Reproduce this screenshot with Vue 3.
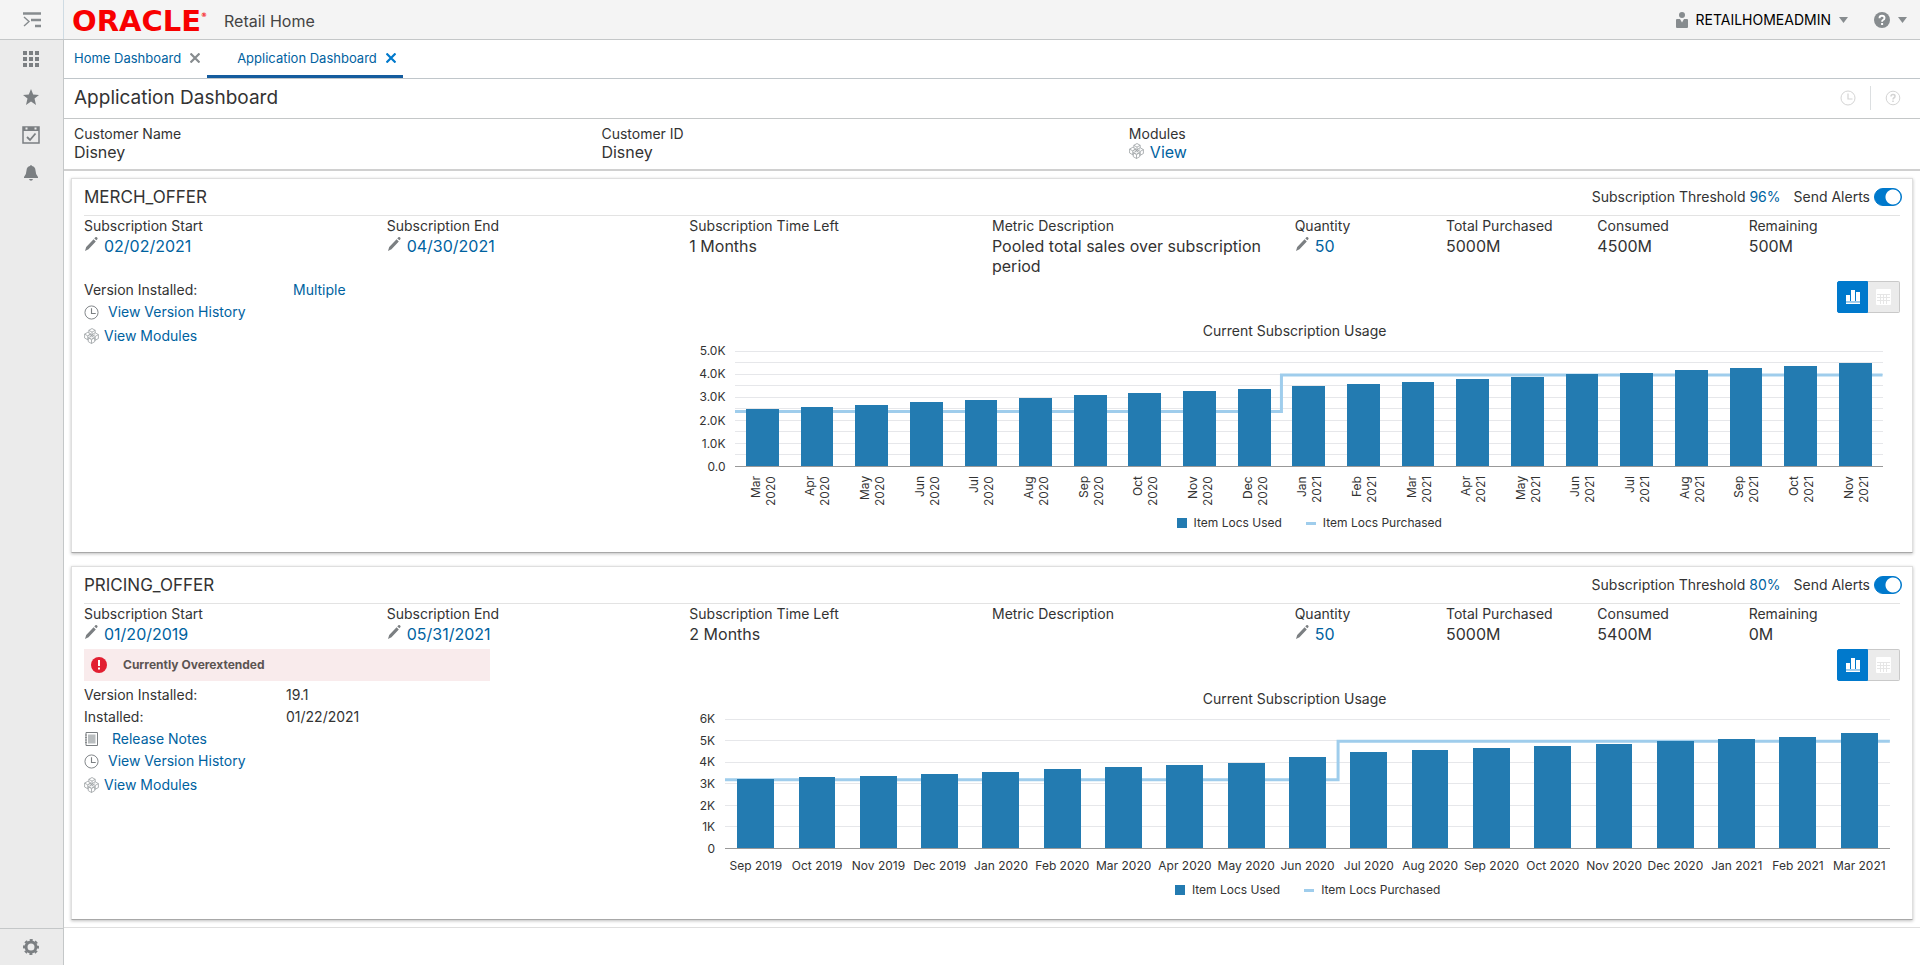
<script setup>
import { ref } from 'vue';

const MONTHS = ['Jan', 'Feb', 'Mar', 'Apr', 'May', 'Jun', 'Jul', 'Aug', 'Sep', 'Oct', 'Nov', 'Dec'];

// Consecutive months as { month, year } pairs, starting at the given one
function monthRange(startMonth, startYear, count) {
  return Array.from({ length: count }, (_, i) => {
    const index = MONTHS.indexOf(startMonth) + i;
    return { month: MONTHS[index % 12], year: startYear + Math.floor(index / 12) };
  });
}

const activeTab = ref('Application Dashboard');
const tabs = ['Home Dashboard', 'Application Dashboard'];

const offers = ref([
  {
    name: 'MERCH_OFFER',
    threshold: '96%',
    alerts: true,
    view: 'chart',
    overextended: false,
    fields: [
      { label: 'Subscription Start', value: '02/02/2021', editable: true },
      { label: 'Subscription End', value: '04/30/2021', editable: true },
      { label: 'Subscription Time Left', value: '1 Months' },
      { label: 'Metric Description', value: 'Pooled total sales over subscription period' },
      { label: 'Quantity', value: '50', editable: true },
      { label: 'Total Purchased', value: '5000M' },
      { label: 'Consumed', value: '4500M' },
      { label: 'Remaining', value: '500M' },
    ],
    version: null,
    chart: {
      rotated: true,
      max: 5,
      height: 115,
      step: 0.5,
      ticks: ['5.0K', '4.0K', '3.0K', '2.0K', '1.0K', '0.0'],
      months: monthRange('Mar', 2020, 21),
      used: [2.5, 2.58, 2.67, 2.8, 2.88, 2.97, 3.1, 3.18, 3.27, 3.36, 3.5, 3.58, 3.67, 3.8, 3.88, 3.98, 4.06, 4.19, 4.27, 4.36, 4.5],
      before: 2.37,
      after: 3.96,
      changeAt: 10,
    },
  },
  {
    name: 'PRICING_OFFER',
    threshold: '80%',
    alerts: true,
    view: 'chart',
    overextended: true,
    fields: [
      { label: 'Subscription Start', value: '01/20/2019', editable: true },
      { label: 'Subscription End', value: '05/31/2021', editable: true },
      { label: 'Subscription Time Left', value: '2 Months' },
      { label: 'Metric Description', value: '' },
      { label: 'Quantity', value: '50', editable: true },
      { label: 'Total Purchased', value: '5000M' },
      { label: 'Consumed', value: '5400M' },
      { label: 'Remaining', value: '0M' },
    ],
    version: '19.1',
    installed: '01/22/2021',
    chart: {
      rotated: false,
      max: 6,
      height: 129,
      step: 1,
      ticks: ['6K', '5K', '4K', '3K', '2K', '1K', '0'],
      months: monthRange('Sep', 2019, 19),
      used: [3.2, 3.28, 3.37, 3.46, 3.55, 3.69, 3.78, 3.88, 3.97, 4.25, 4.48, 4.57, 4.66, 4.75, 4.84, 5, 5.08, 5.17, 5.36],
      before: 3.17,
      after: 4.97,
      changeAt: 10,
    },
  },
]);

function gridLines(chart) {
  const count = Math.round(chart.max / chart.step);
  return Array.from({ length: count }, (_, i) => i * chart.step);
}

function stepPath(chart) {
  const y1 = chart.max - chart.before;
  const y2 = chart.max - chart.after;
  return `M0 ${y1}H${chart.changeAt}V${y2}H${chart.months.length}`;
}
</script>

<template>
  <div class="app">
    <svg class="symbols" aria-hidden="true">
      <symbol id="icon-pencil" viewBox="0 0 14 16">
        <path d="M1 15l1.200-4L9.600 3.200l2.200 2.200L4.500 13.200zM10.300 2.400l1-1.100q.8-.8 1.600 0l.4.5q.7.700 0 1.500l-.9 1z" fill="#7b7f82" />
      </symbol>
      <symbol id="icon-clock" viewBox="0 0 16 16">
        <circle cx="8" cy="8" r="7" fill="none" stroke="currentColor" />
        <path d="M8 3.500V9h4.500" fill="none" stroke="currentColor" stroke-width="1.200" />
      </symbol>
      <symbol id="icon-modules" viewBox="0 0 15 16">
        <g fill="#fff" stroke="#9b9fa2" stroke-width=".8" stroke-linejoin="round">
          <path d="M8 .5l3.200 1.800v3.900L8 8 4.800 6.200V2.300zM4.800 2.300L8 4.100l3.200-1.800M8 4.100V8" />
          <path d="M11.200 4.800l3.200 1.800v3.900l-3.200 1.800L8 10.500V6.600zM8 6.600l3.200 1.800 3.200-1.800M11.200 8.400v3.900" />
          <path d="M3.800 4.300L7 6.100V10l-3.200 1.800L.6 10V6.100zM.6 6.100l3.200 1.800L7 6.100M3.800 7.900v3.900" />
          <path d="M7.500 8l3.200 1.800v3.900l-3.200 1.800-3.200-1.800V9.800zM4.300 9.800l3.200 1.800 3.200-1.800M7.500 11.600v3.900" />
        </g>
      </symbol>
      <symbol id="icon-notes" viewBox="0 0 13 14">
        <path d="M1 .5h11.500v13H1z" fill="#fff" stroke="#7b7f82" />
        <path d="M3 2.500h7.500v9H3z" fill="#b9bdbf" />
        <path d="M0 3h2M0 5.500h2M0 8h2M0 10.500h2" stroke="#7b7f82" stroke-width=".8" />
      </symbol>
      <symbol id="icon-close" viewBox="0 0 10 10">
        <path d="M.5.500l9 9M9.500.500l-9 9" stroke="currentColor" stroke-width="2.200" />
      </symbol>
      <symbol id="icon-caret" viewBox="0 0 9 6">
        <path d="M0 0h9L4.500 6z" fill="#878c8f" />
      </symbol>
    </svg>

    <header class="topbar">
      <button class="menu-button" type="button" aria-label="Expand navigation">
        <svg width="18" height="16" viewBox="0 0 18 16" fill="none" stroke="#878c8f">
          <path d="M0 1.500h18M8 8h10M12 14h6" stroke-width="2.400" />
          <path d="M1 5l5 4.500L1 14" stroke-width="1.400" />
        </svg>
      </button>
      <div class="brand">
        <span class="logo">ORACLE<sup>®</sup></span>
        <span class="product">Retail Home</span>
      </div>
      <div class="account">
        <button class="user-button" type="button">
          <svg width="12" height="16" viewBox="0 0 12 16" fill="#878c8f">
            <circle cx="6" cy="3" r="3" />
            <path d="M1 7h3l2 3.500L8 7h3q1 0 1 1v7q0 1-1 1H1q-1 0-1-1V8q0-1 1-1z" />
          </svg>
          <span>RETAILHOMEADMIN</span>
          <svg width="9" height="6"><use href="#icon-caret" /></svg>
        </button>
        <button class="help-button" type="button" aria-label="Help">
          <svg width="16" height="16" viewBox="0 0 16 16">
            <circle cx="8" cy="8" r="8" fill="#878c8f" />
            <path d="M5.500 6.200Q5.600 3.800 8 3.800t2.500 2.100Q10.500 7.200 9 8q-.9.500-.9 1.700" fill="none" stroke="#fff" stroke-width="1.900" />
            <path d="M7.100 11h2v2h-2z" fill="#fff" />
          </svg>
          <svg width="9" height="6"><use href="#icon-caret" /></svg>
        </button>
      </div>
    </header>

    <div class="layout">
      <nav class="sidebar" aria-label="Main">
        <button class="nav-item" type="button" aria-label="Applications">
          <svg width="16" height="16" viewBox="0 0 16 16" fill="#7b7f82">
            <path d="M0 0h4v4H0zM6 0h4v4H6zM12 0h4v4h-4zM0 6h4v4H0zM6 6h4v4H6zM12 6h4v4h-4zM0 12h4v4H0zM6 12h4v4H6zM12 12h4v4h-4z" />
          </svg>
        </button>
        <button class="nav-item" type="button" aria-label="Favorites">
          <svg width="16" height="16" viewBox="0 0 16 16" fill="#7b7f82">
            <path d="M8 0l2.200 5.500 5.800.4-4.500 3.700L13 16l-5-3.400L3 16l1.500-6.400L0 5.900l5.800-.4z" />
          </svg>
        </button>
        <button class="nav-item" type="button" aria-label="Tasks">
          <svg width="18" height="18" viewBox="0 0 18 18">
            <path d="M1 1h16v16H1z" fill="none" stroke="#7b7f82" stroke-width="1.500" />
            <path d="M1 1h16v4H1z" fill="#7b7f82" />
            <path d="M3.500 1.500h2v2h-2zM12.500 1.500h2v2h-2z" fill="#ebebeb" />
            <path d="M5 11l3 3 5.500-6.500" fill="none" stroke="#7b7f82" stroke-width="1.800" />
          </svg>
        </button>
        <button class="nav-item" type="button" aria-label="Notifications">
          <svg width="14" height="16" viewBox="0 0 14 16" fill="#7b7f82">
            <path d="M6 1q1-1.800 2 0 3.300.8 3.500 4.500.1 4 2.500 6.500v1H0v-1q2.400-2.500 2.500-6.500Q2.700 1.800 6 1zM5 14h4q-.5 1.700-2 1.700T5 14z" />
          </svg>
        </button>
        <button class="nav-item nav-settings" type="button" aria-label="Settings">
          <svg width="16" height="16" viewBox="0 0 16 16">
            <circle cx="8" cy="8" r="5" fill="none" stroke="#7b7f82" stroke-width="3" />
            <circle cx="8" cy="8" r="7" fill="none" stroke="#7b7f82" stroke-width="2" stroke-dasharray="3 2.498" stroke-dashoffset="1.500" />
          </svg>
        </button>
      </nav>

      <main class="main">
        <div class="tabs">
          <div v-for="tab in tabs" :key="tab" :class="['tab', { 'tab-active': tab === activeTab }]">
            <a href="#" @click.prevent="activeTab = tab">{{ tab }}</a>
            <button class="tab-close" type="button" :aria-label="`Close ${tab}`">
              <svg width="10" height="10"><use href="#icon-close" /></svg>
            </button>
          </div>
        </div>

        <div class="titlebar">
          <h1>Application Dashboard</h1>
          <div class="title-actions">
            <button type="button" aria-label="History">
              <svg width="16" height="16"><use href="#icon-clock" /></svg>
            </button>
            <span class="separator"></span>
            <button type="button" aria-label="Page help">
              <svg width="16" height="16" viewBox="0 0 16 16" fill="none" stroke="currentColor">
                <circle cx="8" cy="8" r="6.800" />
                <path d="M6 6.500Q6 4.600 8 4.600t2 1.600Q10 7.300 8.800 8 8 8.500 8 9.600M8 10.500v1.500" stroke-width="1.500" />
              </svg>
            </button>
          </div>
        </div>

        <dl class="customer">
          <div>
            <dt>Customer Name</dt>
            <dd>Disney</dd>
          </div>
          <div>
            <dt>Customer ID</dt>
            <dd>Disney</dd>
          </div>
          <div>
            <dt>Modules</dt>
            <dd class="customer-modules">
              <svg width="15" height="16"><use href="#icon-modules" /></svg>
              <a href="#">View</a>
            </dd>
          </div>
        </dl>

        <div class="offers">
          <section v-for="offer in offers" :key="offer.name" class="card">
            <div class="card-header">
              <h2>{{ offer.name }}</h2>
              <div class="card-controls">
                <span>Subscription Threshold <a href="#">{{ offer.threshold }}</a></span>
                <label class="alerts">
                  Send Alerts
                  <input v-model="offer.alerts" type="checkbox" role="switch" class="switch" />
                </label>
              </div>
            </div>

            <dl class="fields">
              <div v-for="field in offer.fields" :key="field.label">
                <dt>{{ field.label }}</dt>
                <dd v-if="field.editable" class="editable">
                  <svg width="14" height="16"><use href="#icon-pencil" /></svg>
                  <a href="#">{{ field.value }}</a>
                </dd>
                <dd v-else>{{ field.value }}</dd>
              </div>
            </dl>

            <div class="card-body">
              <div class="details">
                <div v-if="offer.overextended" class="alert" role="alert">
                  <svg width="16" height="16" viewBox="0 0 16 16">
                    <circle cx="8" cy="8" r="8" fill="#e21f31" />
                    <path d="M7 3h2v6H7zM7 10.500h2v2H7z" fill="#fff" />
                  </svg>
                  <span>Currently Overextended</span>
                </div>
                <div class="detail-list">
                  <div class="detail-row">
                    <span class="detail-label">Version Installed:</span>
                    <span v-if="offer.version">{{ offer.version }}</span>
                    <a v-else href="#" class="multiple">Multiple</a>
                  </div>
                  <div v-if="offer.installed" class="detail-row">
                    <span class="detail-label">Installed:</span>
                    <span>{{ offer.installed }}</span>
                  </div>
                  <a v-if="offer.installed" href="#" class="detail-link link-notes">
                    <svg width="15" height="14"><use href="#icon-notes" /></svg>Release Notes
                  </a>
                  <a href="#" class="detail-link link-history">
                    <svg width="15" height="15"><use href="#icon-clock" /></svg>View Version History
                  </a>
                  <a href="#" class="detail-link link-modules">
                    <svg width="15" height="16"><use href="#icon-modules" /></svg>View Modules
                  </a>
                </div>
              </div>

              <div class="usage">
                <div class="view-toggle">
                  <button type="button" aria-label="Chart view" :class="{ selected: offer.view === 'chart' }" @click="offer.view = 'chart'">
                    <svg width="14" height="14" viewBox="0 0 14 14" fill="#fff">
                      <path d="M0 5h4v6H0zM5 0h4v11H5zM10 2h4v9h-4zM0 12.500h14V14H0z" />
                      <path d="M0 11h14v1.500H0z" opacity=".6" />
                    </svg>
                  </button>
                  <button type="button" aria-label="Table view" :class="{ selected: offer.view === 'table' }" @click="offer.view = 'table'">
                    <svg width="15" height="16" viewBox="0 0 15 16">
                      <rect width="15" height="16" rx="1" fill="#fff" />
                      <path d="M1 8.500h13M1 11.500h13M4.500 5v10M7.500 5v10M10.500 5v10M1 5.500h13" stroke="#e6e6e6" />
                    </svg>
                  </button>
                </div>

                <h3>Current Subscription Usage</h3>
                <div :class="['chart', { 'chart-rotated': offer.chart.rotated }]">
                  <div class="y-axis">
                    <span v-for="tick in offer.chart.ticks" :key="tick">{{ tick }}</span>
                  </div>
                  <div class="plot">
                    <svg
                      :viewBox="`0 0 ${offer.chart.months.length} ${offer.chart.max}`"
                      :style="{ height: offer.chart.height + 'px' }"
                      preserveAspectRatio="none"
                      role="img"
                      aria-label="Current Subscription Usage"
                    >
                      <path
                        v-for="y in gridLines(offer.chart)"
                        :key="y"
                        class="grid-line"
                        :d="`M0 ${y}H${offer.chart.months.length}`"
                      />
                      <path class="purchased-line" :d="stepPath(offer.chart)" />
                      <rect
                        v-for="(value, i) in offer.chart.used"
                        :key="i"
                        class="used-bar"
                        :x="i + 0.2"
                        :y="offer.chart.max - value"
                        width="0.6"
                        :height="value"
                      />
                    </svg>
                  </div>
                  <div class="x-axis">
                    <span v-for="(m, i) in offer.chart.months" :key="i">
                      <span class="x-label">{{ m.month }} <br v-if="offer.chart.rotated" />{{ m.year }}</span>
                    </span>
                  </div>
                  <div class="legend">
                    <span class="legend-item"><i class="mark-used"></i>Item Locs Used</span>
                    <span class="legend-item"><i class="mark-purchased"></i>Item Locs Purchased</span>
                  </div>
                </div>
              </div>
            </div>
          </section>
        </div>
        <footer class="footer"></footer>
      </main>
    </div>
  </div>
</template>

<style>
body {
  margin: 0;
  background: #fff;
}
</style>

<style scoped>
.app {
  display: flex;
  flex-direction: column;
  min-height: 100vh;
  font-family: Inter, "Liberation Sans", sans-serif;
  font-size: 14px;
  line-height: 20px;
  color: #333;
}

.app * {
  box-sizing: border-box;
}

.symbols {
  position: absolute;
  width: 0;
  height: 0;
}

svg {
  display: block;
  flex: none;
}

button {
  display: flex;
  align-items: center;
  justify-content: center;
  padding: 0;
  border: 0;
  background: none;
  font: inherit;
  color: inherit;
  cursor: pointer;
}

a {
  color: #00629f;
  text-decoration: none;
}

dl,
dd,
h1,
h2,
h3 {
  margin: 0;
  font-weight: 400;
}

/* Top bar */
.topbar {
  display: flex;
  height: 40px;
  background: #f4f4f4;
  border-bottom: 1px solid #c4c7c8;
}

.menu-button {
  width: 64px;
  border-right: 1px solid #cfdbe3;
}

.brand {
  display: flex;
  align-items: center;
  padding: 2px 0 0 8px;
}

.logo {
  display: flex;
  align-items: center;
  width: 152px;
  font-family: "DejaVu Sans", sans-serif;
  font-size: 29px;
  font-weight: 700;
  color: #f80000;
}

.logo sup {
  align-self: flex-start;
  font-size: 6px;
  line-height: 8px;
}

.product {
  font-size: 16px;
  color: #444;
}

.account {
  display: flex;
  gap: 26px;
  margin-left: auto;
  padding-right: 13px;
  color: #000;
}

.user-button,
.help-button {
  gap: 8px;
}

/* Sidebar */
.layout {
  display: flex;
  flex: 1;
}

.sidebar {
  display: flex;
  flex: none;
  flex-direction: column;
  width: 64px;
  background: #ebebeb;
  border-right: 1px solid #c4c7c8;
}

.nav-item {
  height: 38px;
  padding-right: 2px;
}

.nav-settings {
  height: 37px;
  margin-top: auto;
  border-top: 1px solid #c4c7c8;
}

.main {
  display: flex;
  flex: 1;
  flex-direction: column;
  min-width: 0;
}

/* Tabs */
.tabs {
  display: flex;
  height: 39px;
  border-bottom: 1px solid #c0c6ca;
}

.tab {
  display: flex;
  align-items: center;
  gap: 9px;
  padding: 0 7px 2px 10px;
  font-size: 13px;
}

.tab-active {
  padding: 1px 7px 0 30px;
  border-bottom: 3px solid #145c9e;
}

.tab-close {
  color: #878c8f;
}

.tab-active .tab-close {
  color: #0079cc;
}

/* Page title */
.titlebar {
  display: flex;
  align-items: center;
  justify-content: space-between;
  height: 40px;
  padding: 0 19px 1px 10px;
  border-bottom: 1px solid #c4c7c8;
}

h1 {
  font-size: 19px;
}

.title-actions {
  display: flex;
  align-items: center;
  gap: 14px;
  color: #d4d4d4;
}

.separator {
  width: 1px;
  height: 24px;
  background: #dcdfe1;
}

/* Customer summary */
.customer {
  display: grid;
  grid-template-columns: 2fr 2fr 3fr;
  padding: 6px 0 8px 10px;
  line-height: 18px;
  border-bottom: 2px solid #d0d0d0;
}

.customer dd {
  font-size: 16px;
}

.customer-modules {
  display: flex;
  gap: 6px;
}

/* Offer cards */
.offers {
  display: flex;
  flex: 1;
  flex-direction: column;
  gap: 13px;
  padding: 7px 7px 6px;
}

.card {
  padding: 0 12px 21px;
  border: 1px solid #dfdfdf;
  border-bottom-color: #a8a8a8;
  box-shadow: 0 1px 3px rgba(0, 0, 0, 0.25);
}

.card-header {
  display: flex;
  align-items: center;
  justify-content: space-between;
  height: 37px;
  border-bottom: 1px solid #e3e3e3;
}

h2 {
  font-size: 17px;
}

.card-controls {
  display: flex;
  align-items: center;
  gap: 13px;
  margin-right: -2px;
}

.alerts {
  display: flex;
  align-items: center;
  gap: 4px;
}

.switch {
  width: 28px;
  height: 18px;
  margin: 0;
  border: 1px solid #0079cc;
  border-radius: 9px;
  appearance: none;
  background: #fff radial-gradient(circle at 8px 8px, #a0a0a0 7px, transparent 8px);
}

.switch:checked {
  background: #0079cc radial-gradient(circle at 18px 8px, #fff 7px, transparent 8px);
}

.fields {
  display: grid;
  grid-template-columns: repeat(4, 2fr) repeat(4, 1fr);
  padding-bottom: 3px;
}

.fields dd {
  min-height: 20px;
  padding-right: 30px;
  font-size: 16px;
}

.fields .editable {
  display: flex;
  gap: 6px;
  padding-right: 0;
}

.card-body {
  display: grid;
  grid-template-columns: 1fr 2fr;
}

/* Version details */
.alert {
  display: flex;
  align-items: center;
  gap: 16px;
  width: 67%;
  min-width: 240px;
  height: 32px;
  margin: 2px 0 3px;
  padding-left: 7px;
  font-size: 12px;
  font-weight: 700;
  color: #5c5452;
  background: #f9ebec;
}

.detail-list {
  display: flex;
  flex-direction: column;
  align-items: flex-start;
  line-height: 22px;
}

.detail-row {
  display: flex;
}

.detail-label {
  width: 202px;
}

.multiple {
  padding-left: 7px;
}

.detail-link {
  display: flex;
  align-items: center;
}

.link-notes {
  gap: 13px;
}

.link-history {
  gap: 9px;
}

.link-history svg {
  color: #7b7f82;
}

.link-modules {
  gap: 5px;
  padding-top: 2px;
}

/* Usage chart */
.usage {
  min-width: 0;
}

.view-toggle {
  display: flex;
  justify-content: flex-end;
  margin: 2px 0 9px;
}

.view-toggle button {
  width: 32px;
  height: 32px;
  border: 1px solid #c9c9c9;
  border-left: 0;
  border-radius: 0 2px 2px 0;
  background: #ebebeb;
}

.view-toggle button:first-child {
  width: 31px;
  border-left: 1px solid #c9c9c9;
  border-radius: 2px 0 0 2px;
}

.view-toggle .selected,
.view-toggle .selected:first-child {
  border-color: #0079cc;
  background: #0079cc;
}

h3 {
  font-size: 14px;
  line-height: 18px;
  text-align: center;
}

.chart {
  display: grid;
  grid-template-columns: auto 1fr;
  column-gap: 10px;
  padding: 11px 10px 0;
  font-size: 12px;
  line-height: 16px;
}

.chart-rotated {
  padding-right: 17px;
}

.y-axis {
  display: flex;
  flex-direction: column;
  justify-content: space-between;
  margin: -8px 0;
  text-align: right;
}

.plot {
  border-bottom: 1px solid #999;
}

.plot svg {
  width: 100%;
  overflow: visible;
}

.grid-line {
  stroke: #e6e7ea;
  stroke-width: 1px;
  vector-effect: non-scaling-stroke;
  shape-rendering: crispEdges;
}

.purchased-line {
  fill: none;
  stroke: #9fcdec;
  stroke-width: 3px;
  vector-effect: non-scaling-stroke;
}

.used-bar {
  fill: #237bb1;
  shape-rendering: crispEdges;
}

.x-axis {
  display: grid;
  grid-column: 2;
  grid-auto-columns: minmax(0, 1fr);
  grid-auto-flow: column;
  padding-top: 9px;
}

.x-axis > span {
  display: flex;
  justify-content: center;
}

.x-label {
  white-space: nowrap;
}

.chart-rotated .x-label {
  height: 31px;
  line-height: 15px;
  text-align: right;
  writing-mode: vertical-rl;
  transform: rotate(180deg);
}

.legend {
  display: flex;
  grid-column: 2;
  justify-content: center;
  gap: 24px;
  padding-top: 8px;
}

.legend-item {
  display: flex;
  align-items: center;
  gap: 7px;
}

.mark-used {
  width: 10px;
  height: 10px;
  background: #237bb1;
}

.mark-purchased {
  width: 10px;
  height: 3px;
  background: #9fcdec;
}

.footer {
  height: 38px;
  border-top: 1px solid #dfdfdf;
}
</style>
